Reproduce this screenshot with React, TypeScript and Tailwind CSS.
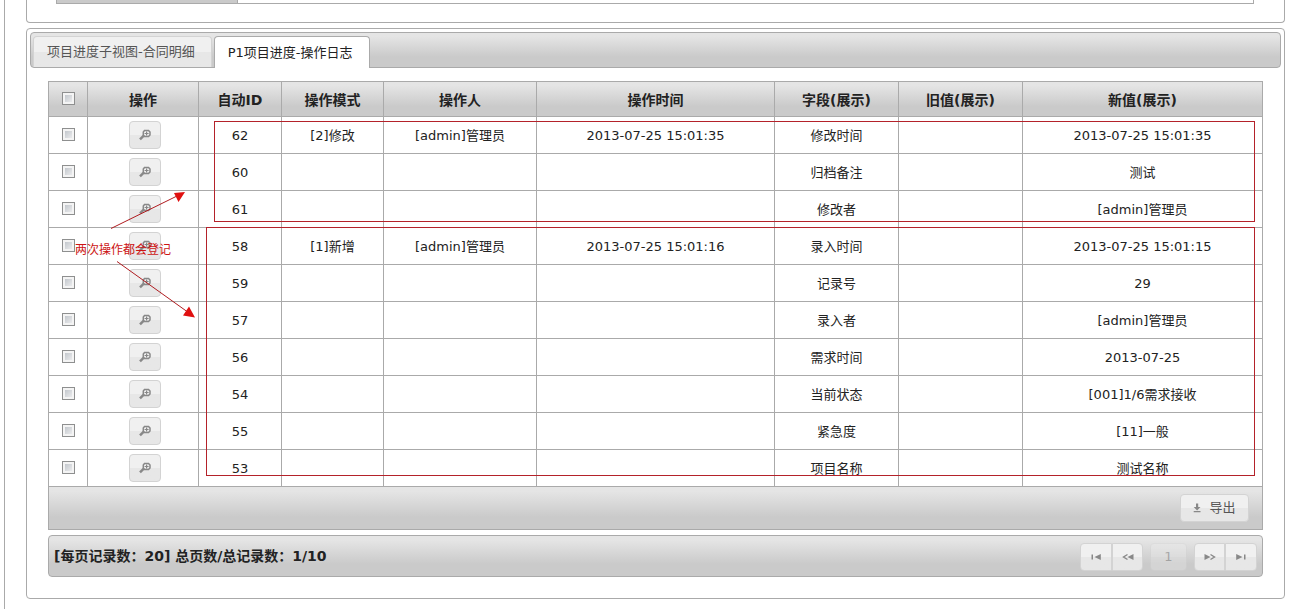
import { ReactNode } from 'react'

interface LogRow {
  id: number
  mode?: string
  user?: string
  time?: string
  field: string
  value: string
}

const rows: LogRow[] = [
  { id: 62, mode: '[2]修改', user: '[admin]管理员', time: '2013-07-25 15:01:35', field: '修改时间', value: '2013-07-25 15:01:35' },
  { id: 60, field: '归档备注', value: '测试' },
  { id: 61, field: '修改者', value: '[admin]管理员' },
  { id: 58, mode: '[1]新增', user: '[admin]管理员', time: '2013-07-25 15:01:16', field: '录入时间', value: '2013-07-25 15:01:15' },
  { id: 59, field: '记录号', value: '29' },
  { id: 57, field: '录入者', value: '[admin]管理员' },
  { id: 56, field: '需求时间', value: '2013-07-25' },
  { id: 54, field: '当前状态', value: '[001]1/6需求接收' },
  { id: 55, field: '紧急度', value: '[11]一般' },
  { id: 53, field: '项目名称', value: '测试名称' },
]

const headers = ['操作', '自动ID', '操作模式', '操作人', '操作时间', '字段(展示)', '旧值(展示)', '新值(展示)']

const barStyle = 'bg-linear-to-b from-[#e5e5e5] from-10% to-[#cacaca] to-70%'
const cellStyle = 'border border-[#aaa] p-0 pt-[2px]'
const buttonStyle =
  'flex h-7 items-center justify-center border border-[#d3d3d3] bg-linear-to-b from-[#f0f0f0] from-50% to-[#e7e7e7] to-50% text-[#555]'

function Checkbox({ label }: { label: string }) {
  return (
    <input
      type="checkbox"
      aria-label={label}
      className="block mx-auto size-[13px] appearance-none border border-[#8e8f8f] bg-linear-to-br from-[#b8bdc4] to-[#f6f6f6] shadow-[inset_0_0_0_2px_#f4f4f4] checked:from-[#555]"
    />
  )
}

function Icon({ children }: { children: ReactNode }) {
  return (
    <svg viewBox="0 0 16 16" className="size-4 text-[#888]" fill="currentColor" aria-hidden="true">
      {children}
    </svg>
  )
}

function ZoomIcon() {
  return (
    <Icon>
      <path d="M7.500 3.500h4l1.500 1.500v3l-1.500 1.500h-4L6.300 8V5z" fill="none" stroke="currentColor" strokeWidth="1.5" />
      <path d="M9 4.500h1.200v1.400h1.400v1.200h-1.400v1.400H9V7.100H7.600V5.900H9z" />
      <path d="M7 8.300 3 12.300" stroke="currentColor" strokeWidth="2.4" />
    </Icon>
  )
}

export default function App() {
  return (
    <div className="ml-1 min-h-screen border-l border-[#aaa] bg-white pr-[11px] pl-[21px] font-['DejaVu_Sans','Noto_Sans_CJK_SC',sans-serif] text-[13px] leading-5 text-[#222]">
      {/* Tail of the form panel above */}
      <section className="rounded-b-[4px] border border-t-0 border-[#aaa] pr-[30px] pb-[18px] pl-[29px]">
        <div className="flex h-1 border border-t-0 border-[#aaa]">
          <div className="w-[181px] border-r border-[#aaa] bg-[#cacaca]" />
        </div>
      </section>

      <section className="mt-[5px] rounded-[4px] border border-[#aaa] p-[3px]">
        {/* Tabs */}
        <div role="tablist" className={`flex gap-[2px] rounded-[4px] border border-[#aaa] pt-[3px] pl-[2px] ${barStyle}`}>
          <button
            role="tab"
            aria-selected="false"
            className="h-[31px] rounded-t-[4px] border border-b-0 border-[#d3d3d3] bg-linear-to-b from-[#f0f0f0] from-50% to-[#e7e7e7] to-50% pr-4 pl-[13px] text-[#555]"
          >
            项目进度子视图-合同明细
          </button>
          <button
            role="tab"
            aria-selected="true"
            className="-mb-px h-8 rounded-t-[4px] border border-b-0 border-[#aaa] bg-white pr-4 pl-[13px]"
          >
            P1项目进度-操作日志
          </button>
        </div>

        <div className="px-[18px] pt-[13px] pb-[18px]">
          <div className="relative">
            <table className="w-full table-fixed border-collapse text-center">
              <colgroup>
                <col className="w-[39px]" />
                <col className="w-[111px]" />
                <col className="w-[83px]" />
                <col className="w-[102px]" />
                <col className="w-[153px]" />
                <col className="w-[238px]" />
                <col className="w-[124px]" />
                <col className="w-[124px]" />
                <col />
              </colgroup>
              <thead>
                <tr className={`h-[35px] ${barStyle}`}>
                  <th className="border border-[#aaa] p-0 pb-[2px]">
                    <Checkbox label="全选" />
                  </th>
                  {headers.map((h) => (
                    <th key={h} className={`text-sm font-bold ${cellStyle}`}>
                      {h}
                    </th>
                  ))}
                </tr>
              </thead>
              <tbody>
                {rows.map((r) => (
                  <tr key={r.id} className="h-[37px]">
                    <td className="border border-[#aaa] p-0 pb-[2px]">
                      <Checkbox label={`选择 ${r.id}`} />
                    </td>
                    <td className="border border-[#aaa] p-0 pl-1">
                      <button aria-label="查看" className={`mx-auto w-8 rounded-[4px] ${buttonStyle}`}>
                        <ZoomIcon />
                      </button>
                    </td>
                    <td className={cellStyle}>{r.id}</td>
                    <td className={cellStyle}>{r.mode}</td>
                    <td className={cellStyle}>{r.user}</td>
                    <td className={cellStyle}>{r.time}</td>
                    <td className={cellStyle}>{r.field}</td>
                    <td className={cellStyle} />
                    <td className={cellStyle}>{r.value}</td>
                  </tr>
                ))}
              </tbody>
              <tfoot>
                <tr className={`h-[43px] ${barStyle}`}>
                  <td colSpan={9} className="border border-[#aaa] p-0 pr-[13px]">
                    <button className={`ml-auto w-[69px] gap-1 rounded-[4px] pr-1 ${buttonStyle}`}>
                      <Icon>
                        <path d="M7 3.500h2.200v3.500h2.300L8.100 10.500 4.700 7H7zM4.700 11h6.800v1.200H4.700z" />
                      </Icon>
                      导出
                    </button>
                  </td>
                </tr>
              </tfoot>
            </table>

            {/* Annotations over the log */}
            <div className="pointer-events-none absolute top-10 right-2 left-[166px] h-[101px] border border-[#b4222a]" />
            <div className="pointer-events-none absolute top-[146px] right-2 left-[158px] h-[249px] border border-[#b4222a]" />
            <svg className="pointer-events-none absolute top-[106px] left-[60px] h-[136px] w-[90px]" viewBox="0 0 90 136" aria-hidden="true">
              <path d="M3 41.500 69 9M9 74.500l70 50" stroke="#b01c20" strokeWidth="1" />
              <path d="M77 5 66 6l4.500 9zM87 130.500l-12-2 6-9z" fill="#e01010" />
            </svg>
            <span className="pointer-events-none absolute top-[159px] left-[27px] text-[12px] text-[#cc1414]">
              两次操作都会登记
            </span>
          </div>

          {/* Pager */}
          <div className={`mt-[5px] flex h-[42px] items-center rounded-[4px] border border-[#aaa] px-[5px] ${barStyle}`}>
            <span className="text-sm font-bold">[每页记录数：20] 总页数/总记录数：1/10</span>
            <div className="mt-[2px] ml-auto flex gap-[7px]">
              <div className="flex">
                <button aria-label="首页" className={`w-8 rounded-l-[4px] ${buttonStyle}`}>
                  <Icon>
                    <path d="M3.500 5.500H5v5H3.500zM12.800 5v6L6.500 8z" />
                  </Icon>
                </button>
                <button aria-label="上一页" className={`w-[31px] rounded-r-[4px] ${buttonStyle}`}>
                  <Icon>
                    <path d="M13.500 5v6L7.500 8z" />
                    <path d="M7.500 5.500 3.500 8l4 2.500" fill="none" stroke="currentColor" strokeWidth="1.400" />
                  </Icon>
                </button>
              </div>
              <button disabled className={`w-[37px] rounded-[4px] opacity-35 ${buttonStyle}`}>
                1
              </button>
              <div className="flex">
                <button aria-label="下一页" className={`w-[31px] rounded-l-[4px] ${buttonStyle}`}>
                  <Icon>
                    <path d="M2.500 5v6L8.500 8z" />
                    <path d="M8.500 5.500 12.500 8l-4 2.500" fill="none" stroke="currentColor" strokeWidth="1.400" />
                  </Icon>
                </button>
                <button aria-label="末页" className={`w-8 rounded-r-[4px] ${buttonStyle}`}>
                  <Icon>
                    <path d="M12.500 5.500H11v5h1.500zM3.200 5v6L9.500 8z" />
                  </Icon>
                </button>
              </div>
            </div>
          </div>
        </div>
      </section>
    </div>
  )
}
